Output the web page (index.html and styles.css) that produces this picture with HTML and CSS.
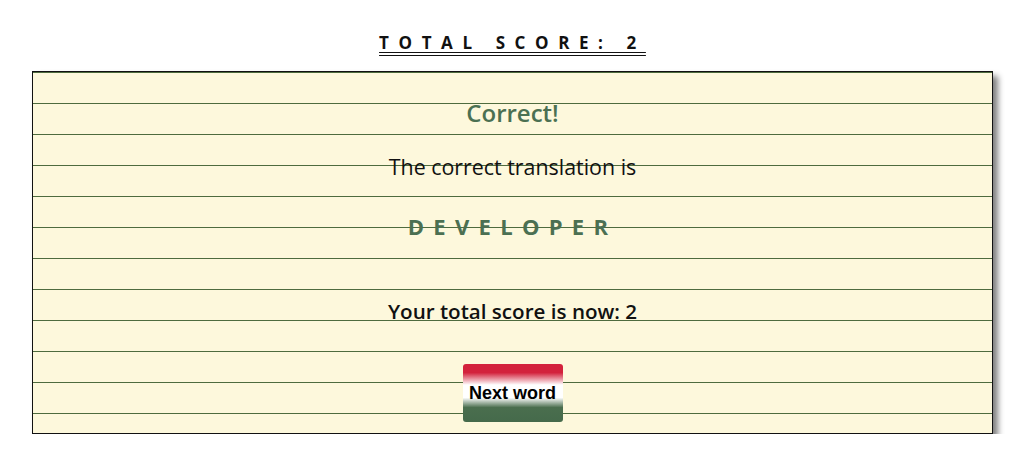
FILE: index.html
```html
<!DOCTYPE html>
<html lang="en">
<head>
<meta charset="utf-8">
<title>Score</title>
<link rel="stylesheet" href="styles.css">
</head>
<body>
<div class="page">
  <h1 class="total">TOTAL SCORE: 2</h1>
  <div class="card">
    <h2 class="result">Correct!</h2>
    <p class="intro">The correct translation is</p>
    <p class="word">DEVELOPER</p>
    <p class="score">Your total score is now: 2</p>
    <button class="next">Next word</button>
  </div>
</div>
</body>
</html>
```
FILE: styles.css
```css
html, body {
  margin: 0;
  padding: 0;
  background: #ffffff;
}
body {
  font-family: "Open Sans", "Noto Sans", sans-serif;
}
.page {
  width: 961px;
  margin-left: 32px;
  padding-top: 32px;
}
.total {
  margin: 0 0 17px 0;
  text-align: center;
  font-size: 17px;
  font-weight: 700;
  letter-spacing: 9.6px;
  line-height: 22px;
  color: #111;
  text-decoration: underline double;
  text-underline-offset: 3px;
}
.card {
  box-sizing: border-box;
  height: 363px;
  border: 1px solid #111;
  background-color: #fdf8dc;
  background-image: linear-gradient(to bottom, #4e6b3e 0, #4e6b3e 1px, transparent 1px);
  background-size: 100% 31px;
  background-position: 0 0;
  box-shadow: 5px 5px 6px #808080;
  display: flex;
  flex-direction: column;
  align-items: center;
  text-align: center;
}
.result {
  margin: 26px 0 0 0;
  font-size: 24px;
  line-height: 30px;
  font-weight: 600;
  color: #4b7052;
}
.intro {
  margin: 25px 0 0 0;
  font-size: 21.4px;
  line-height: 28px;
  color: #111;
}
.word {
  margin: 31px 0 0 0;
  font-size: 22px;
  line-height: 28px;
  font-weight: 700;
  letter-spacing: 9.3px;
  color: #4b7052;
}
.score {
  margin: 57px 0 0 0;
  font-size: 20.6px;
  line-height: 28px;
  font-weight: 600;
  color: #111;
}
.next {
  margin-top: 39px;
  width: 100px;
  height: 58px;
  border: none;
  border-radius: 3px;
  padding: 0;
  font-family: "Liberation Sans", Arial, sans-serif;
  font-weight: 700;
  font-size: 18px;
  color: #000;
  background: linear-gradient(to bottom, #d3223c 0%, #d3223c 15%, #ffffff 36%, #ffffff 58%, #4a6e4e 75%, #456a4b 100%);
}
```
